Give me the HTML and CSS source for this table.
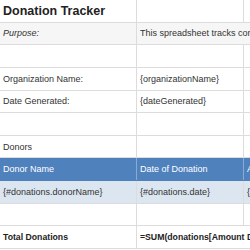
FILE: index.html
```html
<!DOCTYPE html>
<html>
<head>
<meta charset="utf-8">
<link rel="stylesheet" href="styles.css">
</head>
<body>
<div class="sheet">
  <div class="row">
    <div class="cell c1 title">Donation Tracker</div>
    <div class="cell c2"></div>
    <div class="cell c3"></div>
  </div>
  <div class="row shade">
    <div class="cell c1 italic">Purpose:</div>
    <div class="cell span">This spreadsheet tracks contributions received from donors</div>
  </div>
  <div class="row">
    <div class="cell c1"></div>
    <div class="cell c2"></div>
    <div class="cell c3"></div>
  </div>
  <div class="row">
    <div class="cell c1">Organization Name:</div>
    <div class="cell c2">{organizationName}</div>
    <div class="cell c3"></div>
  </div>
  <div class="row">
    <div class="cell c1">Date Generated:</div>
    <div class="cell c2">{dateGenerated}</div>
    <div class="cell c3"></div>
  </div>
  <div class="row">
    <div class="cell c1"></div>
    <div class="cell c2"></div>
    <div class="cell c3"></div>
  </div>
  <div class="row">
    <div class="cell c1">Donors</div>
    <div class="cell c2"></div>
    <div class="cell c3"></div>
  </div>
  <div class="row head">
    <div class="cell c1">Donor Name</div>
    <div class="cell c2">Date of Donation</div>
    <div class="cell c3">Amount Donated</div>
  </div>
  <div class="row data">
    <div class="cell c1">{#donations.donorName}</div>
    <div class="cell c2">{#donations.date}</div>
    <div class="cell c3">{#donations.amount}</div>
  </div>
  <div class="row">
    <div class="cell c1"></div>
    <div class="cell c2"></div>
    <div class="cell c3"></div>
  </div>
  <div class="row">
    <div class="cell c1 bold">Total Donations</div>
    <div class="cell span bold">=SUM(donations[Amount Donated])</div>
  </div>
</div>
</body>
</html>
```

FILE: styles.css
```css
html, body {
  margin: 0;
  padding: 0;
  background: #ffffff;
  overflow: hidden;
}
.sheet {
  width: 340px;
  font-family: "Liberation Sans", Arial, sans-serif;
  font-size: 9px;
  color: #333333;
}
.row {
  display: grid;
  grid-template-columns: 137px 107px 96px;
  height: 22.65px;
  box-sizing: border-box;
  border-bottom: 1px solid #dcdcdc;
}
.cell {
  box-sizing: border-box;
  display: flex;
  align-items: center;
  padding: 0 3px;
  white-space: nowrap;
  overflow: hidden;
  border-right: 1px solid #dcdcdc;
}
.span {
  grid-column: 2 / 4;
  overflow: visible;
}
.title {
  font-size: 12.5px;
  font-weight: bold;
  color: #222222;
}
.italic { font-style: italic; }
.bold { font-weight: bold; font-size: 8.7px; color: #222222; }
.shade { background: #f6f6f6; }
.head {
  background: #4f81bd;
  color: #ffffff;
  border-bottom-color: #4f81bd;
}
.head .cell { border-right-color: #8aa9d3; }
.data { background: #dce6f1; }
```
